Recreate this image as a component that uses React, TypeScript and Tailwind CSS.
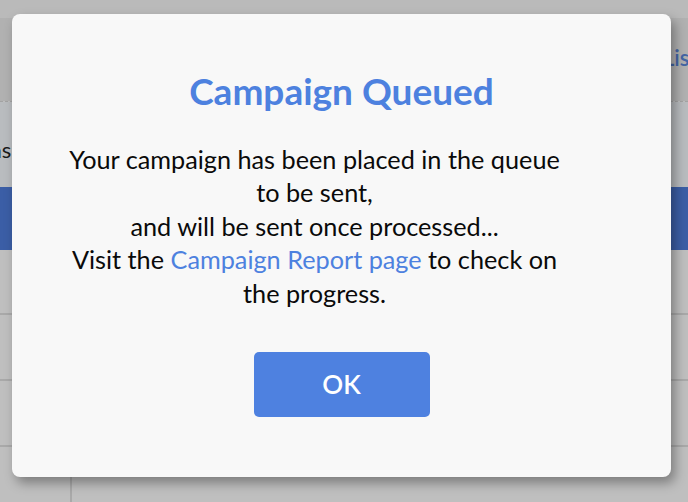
import React from 'react';

const font = { fontFamily: 'Lato, "Noto Sans", sans-serif' };

export default function App() {
  return (
    <div className="relative h-[502px] w-[688px] overflow-hidden bg-[#bfbfbf]" style={font}>
      {/* page behind the overlay */}
      <div className="h-[18px] bg-[#bababa]" />
      <div className="flex h-[83px] items-center justify-end bg-[#b1b1b1] pb-[4px]">
        <span className="mr-[-19px] text-[22px] font-semibold text-[#4566a6]">Lists</span>
      </div>
      <div className="border-t border-dashed border-[#a3a3a3]" />
      <div className="flex h-[85px] items-center bg-[#b9bcbf] pt-[10px]">
        <span className="ml-[-21px] text-[22px] text-[#1a1a1a]">Tns</span>
      </div>
      <div className="h-[63px] bg-[#3b5ea6]" />
      <div className="h-[65px] border-b-2 border-[#a9a9a9]" />
      <div className="h-[66px] border-b-2 border-[#a9a9a9]" />
      <div className="h-[66px] border-b-2 border-[#a9a9a9]" />
      <div className="flex h-[60px]">
        <div className="w-[72px] border-r-2 border-[#a9a9a9]" />
      </div>

      {/* modal */}
      <div className="absolute left-[12px] top-[14px] flex h-[463px] w-[659px] flex-col items-center rounded-[8px] bg-[#f8f8f8] pt-[55px] shadow-[4px_6px_12px_rgba(0,0,0,0.35)]">
        <h2 className="text-[37px] font-bold leading-[44px] text-[#4d81df]">Campaign Queued</h2>
        <p className="mr-[54px] mt-[30px] w-[500px] text-center text-[25.25px] leading-[33.4px] text-[#0a0a0a]">
          Your campaign has been placed in the queue to be sent,
          <br />
          and will be sent once processed...
          <br />
          Visit the <a className="text-[#4d81df]">Campaign Report page</a> to check on the progress.
        </p>
        <button className="mt-[42px] h-[65px] w-[176px] rounded-[5px] bg-[#4e81e0] text-[26px] font-semibold text-white">
          OK
        </button>
      </div>
    </div>
  );
}
